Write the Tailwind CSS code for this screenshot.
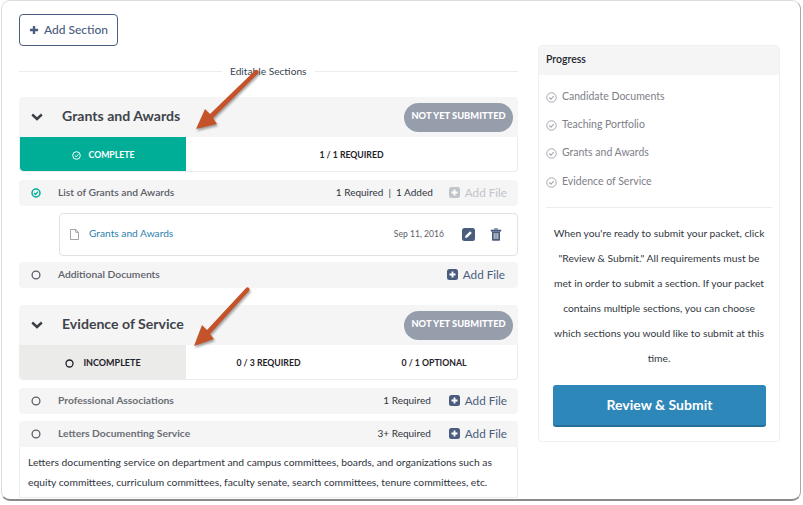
<!DOCTYPE html>
<html><head><meta charset="utf-8"><script src="https://cdn.jsdelivr.net/npm/@tailwindcss/browser@4"></script></head>
<body class="bg-white">
<div class="relative w-[803px] h-[505px] overflow-hidden bg-white font-['Lato','Open_Sans',sans-serif]">
  <div class="relative w-[800px] h-[501px] ml-px rounded-[9px] border border-[#dcdcdc] border-r-[#a8a8a8] border-b-[#8a8a8a] border-b-2 overflow-hidden bg-white flex gap-5 pl-[17px] pr-[20px] pt-[13px]">
    <!-- left column -->
    <div class="w-[499px] shrink-0 flex flex-col">
      <button class="w-[99px] h-8 rounded border border-[#4a5d7e] flex items-center justify-center gap-[5px] text-[12px] text-[#4a5d7e] font-medium">
        <svg width="10" height="10" viewBox="0 0 11 11"><path d="M5.5 1v9M1 5.5h9" stroke="#4a5d7e" stroke-width="2.6"/></svg>Add Section
      </button>
      <div class="relative h-px bg-[#ececec] mt-[25px] mb-[25px]">
        <span class="absolute left-[203px] -top-[8px] px-2 bg-white text-[10.2px] leading-4 text-[#3d4450]">Editable Sections</span>
      </div>

      <div class="h-10 rounded-t bg-[#f5f5f5] flex items-center pl-[12px] pr-[5px]">
        <svg width="12" height="8" viewBox="0 0 12 8"><path d="M1.2 1.5 6 6l4.800-4.500" fill="none" stroke="#3a3f47" stroke-width="2.4"/></svg>
        <span class="ml-[19px] pb-[2px] text-[14.1px] font-bold text-[#3f444c]">Grants and Awards</span>
        <span class="ml-auto pb-[2px] w-[109px] h-[29px] rounded-full bg-[#969eac] text-white text-[9.3px] font-black flex items-center justify-center">NOT YET SUBMITTED</span>
      </div>
      <div class="h-[35px] flex border border-t-0 border-[#ececec] rounded-b">
        <div class="w-[166px] pt-[2px] bg-[#00ad97] text-white rounded-bl flex items-center justify-center gap-[8px] text-[8.7px] font-bold">
          <svg width="9" height="9" viewBox="0 0 9 9"><circle cx="4.5" cy="4.5" r="3.8" fill="none" stroke="#fff"/><path d="M2.8 4.5 4.2 5.8 6.300 3.300" fill="none" stroke="#fff"/></svg>COMPLETE
        </div>
        <div class="flex-1 pt-[2px] flex items-center justify-center text-[8.7px] font-bold text-[#1e2228]">1 / 1 REQUIRED</div>
      </div>

      <div class="mt-2 h-[26px] pb-px rounded bg-[#f5f5f5] flex items-center pl-[12px] pr-[11px] text-[10px]">
        <svg width="10" height="10" viewBox="0 0 10 10"><circle cx="5" cy="5" r="4" fill="none" stroke="#00ad97" stroke-width="1.5"/><path d="M3 5 4.500 6.500 7 3.600" fill="none" stroke="#00ad97" stroke-width="1.3"/></svg>
        <span class="ml-[17px] text-[10.300px] font-semibold text-[#5c6068]">List of Grants and Awards</span>
        <span class="ml-auto text-[#2f343d]">1 Required &nbsp;|&nbsp; 1 Added</span>
        <span class="ml-4 flex items-center gap-[5px] text-[11.700px] text-[#c0c4cb]"><svg width="11" height="11" viewBox="0 0 11 11"><rect width="11" height="11" rx="2.5" fill="#c0c4cb"/><path d="M5.500 2.500v6M2.500 5.500h6" stroke="#fff" stroke-width="1.800"/></svg>Add File</span>
      </div>
      <div class="mt-[7px] ml-10 h-[43px] rounded border border-[#e2e2e2] flex items-center pl-[10px] pr-[15px]">
        <svg width="9" height="11" viewBox="0 0 9 11"><path d="M.5.5h5.200l2.800 2.800v7.200h-8zM5.700.5v2.800h2.800" fill="none" stroke="#8a8d92" stroke-width=".8"/></svg>
        <span class="ml-[10px] pb-[2px] text-[10.200px] text-[#2d7fae]">Grants and Awards</span>
        <span class="ml-auto text-[8.600px] text-[#5c6068]">Sep 11, 2016</span>
        <span class="ml-[18px] w-[13px] h-[13px] rounded-[2.500px] bg-[#4a5d7e] flex items-center justify-center"><svg width="9" height="9" viewBox="0 0 9 9"><path d="M1 8l.5-2.300L6 1.200l1.800 1.800L3.300 7.500z" fill="#fff"/></svg></span>
        <svg class="ml-[15px]" width="12" height="13" viewBox="0 0 11 13"><path d="M4 1.500V.7h3v.8M.5 2h10v1.200H.5z" fill="#4a5d7e" stroke="#4a5d7e" stroke-width=".6"/><path d="M1.500 3.500h8V12a.8.8 0 0 1-.8.8H2.300a.8.8 0 0 1-.8-.8z" fill="#4a5d7e"/><path d="M3.700 5v6M5.500 5v6M7.300 5v6" stroke="#fff" stroke-width=".8"/></svg>
      </div>
      <div class="mt-[6px] h-[26px] pb-px rounded bg-[#f5f5f5] flex items-center pl-[12px] pr-[13px] text-[10.300px]">
        <svg width="10" height="10" viewBox="0 0 10 10"><circle cx="5" cy="5" r="3.900" fill="none" stroke="#5c6068" stroke-width="1.300"/></svg>
        <span class="ml-[17px] font-semibold text-[#5c6068]">Additional Documents</span>
        <span class="ml-auto flex items-center gap-[5px] text-[11.700px] text-[#4a5d7e]"><svg width="11" height="11" viewBox="0 0 11 11"><rect width="11" height="11" rx="2.500" fill="#4a5d7e"/><path d="M5.500 2.500v6M2.500 5.500h6" stroke="#fff" stroke-width="1.800"/></svg>Add File</span>
      </div>

      <div class="mt-[17px] h-10 rounded-t bg-[#f5f5f5] flex items-center pl-[12px] pr-[5px]">
        <svg width="12" height="8" viewBox="0 0 12 8"><path d="M1.200 1.500 6 6l4.800-4.500" fill="none" stroke="#3a3f47" stroke-width="2.400"/></svg>
        <span class="ml-[19px] pb-[2px] text-[14.100px] font-bold text-[#3f444c]">Evidence of Service</span>
        <span class="ml-auto pb-[2px] w-[109px] h-[29px] rounded-full bg-[#969eac] text-white text-[9.300px] font-black flex items-center justify-center">NOT YET SUBMITTED</span>
      </div>
      <div class="h-[35px] flex border border-t-0 border-[#ececec] rounded-b">
        <div class="w-[166px] pt-[2px] bg-[#ebebe9] text-[#1e2228] rounded-bl flex items-center justify-center gap-[9px] text-[9px] font-bold">
          <svg width="9" height="9" viewBox="0 0 9 9"><circle cx="4.500" cy="4.500" r="3.500" fill="none" stroke="#1e2228" stroke-width="1.300"/></svg>INCOMPLETE
        </div>
        <div class="w-[165px] pt-[2px] flex items-center justify-center text-[8.700px] font-bold text-[#1e2228]">0 / 3 REQUIRED</div>
        <div class="flex-1 pt-[2px] flex items-center justify-center text-[8.700px] font-bold text-[#1e2228]">0 / 1 OPTIONAL</div>
      </div>

      <div class="mt-2 h-[26px] pb-px rounded bg-[#f5f5f5] flex items-center pl-[12px] pr-[11px] text-[10px]">
        <svg width="10" height="10" viewBox="0 0 10 10"><circle cx="5" cy="5" r="3.900" fill="none" stroke="#5c6068" stroke-width="1.300"/></svg>
        <span class="ml-[17px] text-[10.300px] font-bold text-[#6a6e75]">Professional Associations</span>
        <span class="ml-auto text-[#2f343d]">1 Required</span>
        <span class="ml-[18px] flex items-center gap-[5px] text-[11.700px] text-[#4a5d7e]"><svg width="11" height="11" viewBox="0 0 11 11"><rect width="11" height="11" rx="2.500" fill="#4a5d7e"/><path d="M5.500 2.500v6M2.500 5.500h6" stroke="#fff" stroke-width="1.800"/></svg>Add File</span>
      </div>
      <div class="mt-[7px] h-[26px] pb-px rounded-t bg-[#f5f5f5] flex items-center pl-[12px] pr-[11px] text-[10px]">
        <svg width="10" height="10" viewBox="0 0 10 10"><circle cx="5" cy="5" r="3.900" fill="none" stroke="#5c6068" stroke-width="1.300"/></svg>
        <span class="ml-[17px] text-[10.300px] font-bold text-[#6a6e75]">Letters Documenting Service</span>
        <span class="ml-auto text-[#2f343d]">3+ Required</span>
        <span class="ml-[18px] flex items-center gap-[5px] text-[11.700px] text-[#4a5d7e]"><svg width="11" height="11" viewBox="0 0 11 11"><rect width="11" height="11" rx="2.500" fill="#4a5d7e"/><path d="M5.500 2.500v6M2.500 5.500h6" stroke="#fff" stroke-width="1.800"/></svg>Add File</span>
      </div>
      <div class="h-[51px] border border-t-0 border-[#ececec] pl-2 pt-[5px] text-[10.300px] leading-5 text-[#2f343d] whitespace-nowrap">
        Letters documenting service on department and campus committees, boards, and organizations such as<br>equity committees, curriculum committees, faculty senate, search committees, tenure committees, etc.
      </div>
    </div>

    <!-- right column -->
    <div class="w-[242px] h-[397px] mt-[31px] rounded border border-[#f0f0f0] shrink-0 flex flex-col">
      <div class="h-[29px] pb-[2px] bg-[#f5f5f5] rounded-t flex items-center pl-[7px] text-[10.500px] font-semibold text-[#23272e]">Progress</div>
      <ul class="h-[133px] mx-[7px] pt-[8px] border-b border-[#ececec] flex flex-col text-[10.500px] text-[#7d8087]">
        <li class="h-[28px] flex items-center gap-[5px]"><svg width="11" height="11" viewBox="0 0 11 11"><circle cx="5.500" cy="5.500" r="4.700" fill="none" stroke="#a3a6ab"/><path d="M3.300 5.500 5 7.200 7.800 4" fill="none" stroke="#a3a6ab" stroke-width="1.100"/></svg>Candidate Documents</li>
        <li class="h-[28px] flex items-center gap-[5px]"><svg width="11" height="11" viewBox="0 0 11 11"><circle cx="5.500" cy="5.500" r="4.700" fill="none" stroke="#a3a6ab"/><path d="M3.300 5.500 5 7.200 7.800 4" fill="none" stroke="#a3a6ab" stroke-width="1.100"/></svg>Teaching Portfolio</li>
        <li class="h-[28px] flex items-center gap-[5px]"><svg width="11" height="11" viewBox="0 0 11 11"><circle cx="5.500" cy="5.500" r="4.700" fill="none" stroke="#a3a6ab"/><path d="M3.300 5.500 5 7.200 7.800 4" fill="none" stroke="#a3a6ab" stroke-width="1.100"/></svg>Grants and Awards</li>
        <li class="h-[28px] mt-px flex items-center gap-[5px]"><svg width="11" height="11" viewBox="0 0 11 11"><circle cx="5.500" cy="5.500" r="4.700" fill="none" stroke="#a3a6ab"/><path d="M3.300 5.500 5 7.200 7.800 4" fill="none" stroke="#a3a6ab" stroke-width="1.100"/></svg>Evidence of Service</li>
      </ul>
      <p class="mt-[13px] text-center text-[10.300px] leading-[25px] text-[#333842] whitespace-nowrap">When you're ready to submit your packet, click<br>"Review &amp; Submit." All requirements must be<br>met in order to submit a section. If your packet<br>contains multiple sections, you can choose<br>which sections you would like to submit at this<br>time.</p>
      <button class="mt-[14px] ml-[14px] mr-[13px] h-[42px] pb-px rounded-[3px] bg-[#2d87b8] border-b-2 border-[#256f99] text-white text-[14px] font-bold">Review &amp; Submit</button>
    </div>

    <!-- annotation arrows -->
    <svg class="absolute left-0 top-0 pointer-events-none drop-shadow-[1px_2px_1px_rgba(0,0,0,0.35)]" width="800" height="500" viewBox="1 1 800 500">
      <path d="M195 129 204 109 209 114 254 70.500a2 2 0 0 1 3 3L212 118 216 124z" fill="#c4532a"/>
      <path d="M193 346 201 325 206 330 245 288a2 2 0 0 1 3 3L209 334 213 339z" fill="#c4532a"/>
    </svg>
  </div>
</div>
</body></html>
